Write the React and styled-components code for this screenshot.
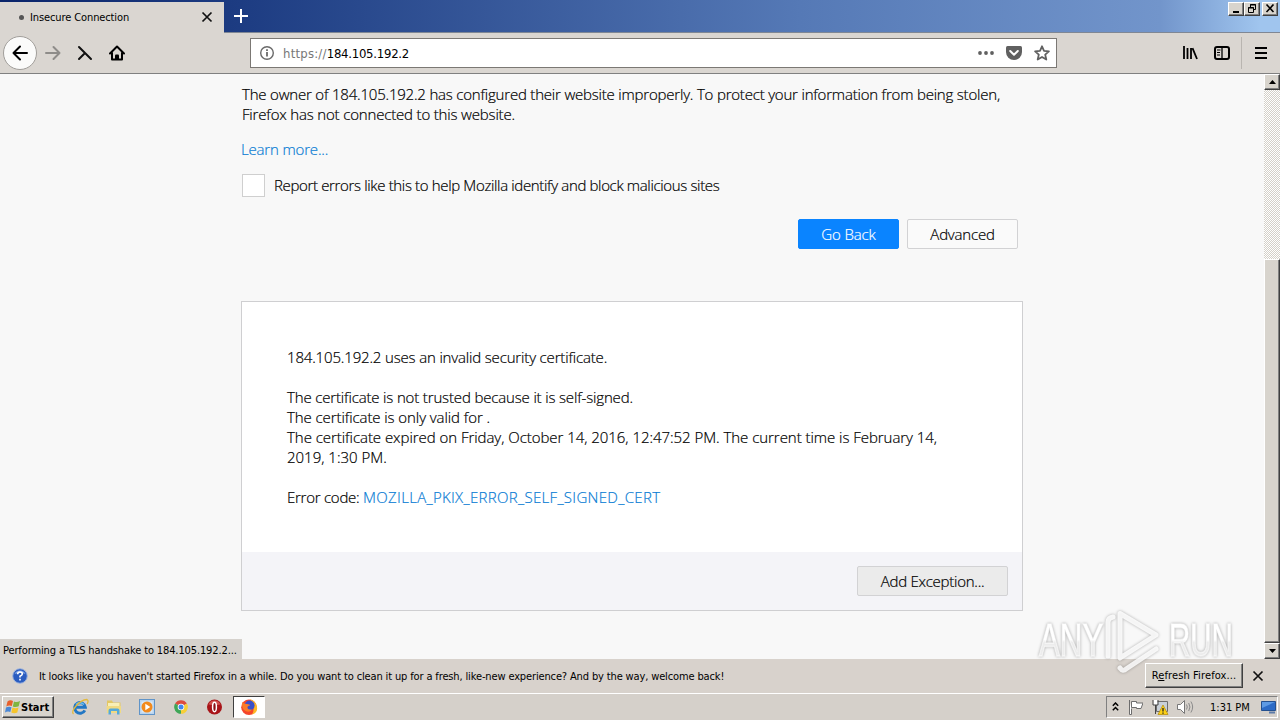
import React from 'react';
import styled, { createGlobalStyle } from 'styled-components';

const GlobalStyle = createGlobalStyle`
  * {
    box-sizing: border-box;
  }

  body {
    margin: 0;
    overflow: hidden;
    background: #f8f8f8;
    color: #000;
    font-family: 'DejaVu Sans Condensed', 'DejaVu Sans', sans-serif;
    font-stretch: condensed;
    font-size: 11px;
  }

  p {
    margin: 0;
  }

  svg {
    display: block;
    flex: none;
  }
`;

const App = () => {
  return (
    <Screen>
      <GlobalStyle />
      <TabStrip />
      <NavBar />
      <ErrorPage />
      <Notification />
      <Taskbar />
      <Watermark />
    </Screen>
  );
};

const TabStrip = () => (
  <Strip>
    <Tab>
      <Dot />
      <Label $spacing={-0.11}>Insecure Connection</Label>
      <svg width='12' height='12' viewBox='0 0 12 12'>
        <path d='M1.5 1.5l9 9m0-9l-9 9' stroke='#111' strokeWidth='1.7' />
      </svg>
    </Tab>
    <NewTab>
      <svg width='14' height='14' viewBox='0 0 14 14'>
        <path d='M7 0v14M0 7h14' stroke='#fff' strokeWidth='2' />
      </svg>
    </NewTab>
    <WindowButtons>
      <WindowButton>
        <svg width='10' height='9' viewBox='0 0 10 9'>
          <path d='M2 8h6' stroke='#000' strokeWidth='2' />
        </svg>
      </WindowButton>
      <WindowButton>
        <svg width='10' height='9' viewBox='0 0 10 9'>
          <path
            d='M3.5 3V.5h5v5H6.5M3 1h6M1.5 3.5h5v5h-5zM1 4h6'
            fill='none'
            stroke='#000'
          />
        </svg>
      </WindowButton>
      <WindowButton $gap>
        <svg width='10' height='9' viewBox='0 0 10 9'>
          <path d='M1.5 .5l7 7.5m0-7.5l-7 7.5' stroke='#000' strokeWidth='1.6' />
        </svg>
      </WindowButton>
    </WindowButtons>
  </Strip>
);

const NavBar = () => (
  <Nav>
    <BackButton>
      <svg width='16' height='16' viewBox='0 0 16 16'>
        <path
          d='M15 8H1.5M8 1.5L1.5 8L8 14.5'
          fill='none'
          stroke='#000'
          strokeWidth='2'
          strokeLinecap='round'
          strokeLinejoin='round'
        />
      </svg>
    </BackButton>
    <NavIcons>
      <svg width='16' height='16' viewBox='0 0 16 16'>
        <path
          d='M1 8h13.5M8.5 2l6 6l-6 6'
          fill='none'
          stroke='#8e8c89'
          strokeWidth='2'
          strokeLinecap='round'
          strokeLinejoin='round'
        />
      </svg>
      <svg width='16' height='16' viewBox='0 0 16 16'>
        <path
          d='M2 2l12 12M8 8L2 14'
          fill='none'
          stroke='#111'
          strokeWidth='2'
          strokeLinecap='round'
        />
      </svg>
      <svg width='16' height='16' viewBox='0 0 16 16'>
        <path
          d='M1 8.5L8 1.5L15 8.5M3 8v6.5h10V8'
          fill='none'
          stroke='#000'
          strokeWidth='2'
          strokeLinecap='round'
          strokeLinejoin='round'
        />
        <path d='M6 15v-4.5q0-1 1-1h2q1 0 1 1V15z' fill='#000' />
      </svg>
    </NavIcons>
    <UrlBar>
      <svg width='16' height='16' viewBox='0 0 16 16'>
        <circle cx='8' cy='8' r='6.3' fill='none' stroke='#6a6a6a' strokeWidth='1.4' />
        <path d='M8 7v4.5M8 4.2v1.7' stroke='#6a6a6a' strokeWidth='1.8' />
      </svg>
      <Url>
        <span>https://</span>184.105.192.2
      </Url>
      <UrlIcons>
        <svg width='18' height='16' viewBox='0 0 18 16'>
          <circle cx='4' cy='8' r='1.9' fill='#606060' />
          <circle cx='10' cy='8' r='1.9' fill='#606060' />
          <circle cx='16' cy='8' r='1.9' fill='#606060' />
        </svg>
        <svg width='16' height='16' viewBox='0 0 16 16'>
          <path d='M1.5 1h13Q16 1 16 2.5V7a8 8 0 0 1-16 0V2.5Q0 1 1.5 1z' fill='#606060' />
          <path
            d='M4.2 6L8 9.7L11.8 6'
            fill='none'
            stroke='#fff'
            strokeWidth='2'
            strokeLinecap='round'
            strokeLinejoin='round'
          />
        </svg>
        <svg width='16' height='16' viewBox='0 0 16 16'>
          <path
            d='M8 1.3l2 4.5l4.9.5l-3.7 3.3l1.1 4.9L8 12l-4.3 2.5l1.1-4.9L1.1 6.3L6 5.8z'
            fill='none'
            stroke='#606060'
            strokeWidth='1.8'
            strokeLinejoin='round'
          />
        </svg>
      </UrlIcons>
    </UrlBar>
    <ToolIcons>
      <svg width='16' height='16' viewBox='0 0 16 16'>
        <path d='M2 1v13M5.5 3v11M9 3v11M10.5 3.2L15 14' stroke='#000' strokeWidth='1.8' />
      </svg>
      <svg width='16' height='16' viewBox='0 0 16 16'>
        <rect x='1' y='2' width='14' height='12' rx='2' fill='none' stroke='#000' strokeWidth='2' />
        <path d='M8 2v12' stroke='#000' strokeWidth='1.3' />
        <path d='M3 5h3.5M3 7.5h3M3 10h3' stroke='#000' />
      </svg>
    </ToolIcons>
    <MenuButton>
      <svg width='12' height='12' viewBox='0 0 12 12'>
        <path d='M0 1h12M0 6h12M0 11h12' stroke='#000' strokeWidth='2' />
      </svg>
    </MenuButton>
  </Nav>
);

const ErrorPage = () => (
  <Page>
    <Content>
      <Intro>
        <Line $spacing={-0.198}>
          The owner of 184.105.192.2 has configured their website improperly. To protect your
          information from being stolen,
        </Line>
        <Line $spacing={-0.17}>Firefox has not connected to this website.</Line>
      </Intro>
      <LearnMore>
        <Line as='a' $spacing={-0.17}>Learn more...</Line>
      </LearnMore>
      <Report>
        <Checkbox />
        <Line $spacing={-0.345}>
          Report errors like this to help Mozilla identify and block malicious sites
        </Line>
      </Report>
      <Actions>
        <Button $primary $width={101} $spacing={-0.1}>Go Back</Button>
        <Button $width={111} $spacing={-0.2}>Advanced</Button>
      </Actions>
      <Panel>
        <Details>
          <Line $spacing={-0.16}>184.105.192.2 uses an invalid security certificate.</Line>
          <Line />
          <Line $spacing={-0.155}>The certificate is not trusted because it is self-signed.</Line>
          <Line $spacing={-0.08}>The certificate is only valid for .</Line>
          <Line $spacing={-0.042}>
            The certificate expired on Friday, October 14, 2016, 12:47:52 PM. The current time is
            February 14,
          </Line>
          <Line>2019, 1:30 PM.</Line>
          <Line />
          <Line $spacing={-0.25}>
            Error code: <ErrorCode>MOZILLA_PKIX_ERROR_SELF_SIGNED_CERT</ErrorCode>
          </Line>
        </Details>
        <PanelFooter>
          <Button $grey $width={151} $spacing={-0.25}>Add Exception...</Button>
        </PanelFooter>
      </Panel>
    </Content>
    <Scrollbar>
      <ScrollButton>
        <svg width='7' height='4' viewBox='0 0 7 4'>
          <path d='M3.5 0L7 4H0z' />
        </svg>
      </ScrollButton>
      <Thumb />
      <ScrollButton>
        <svg width='7' height='4' viewBox='0 0 7 4'>
          <path d='M3.5 4L7 0H0z' />
        </svg>
      </ScrollButton>
    </Scrollbar>
    <Status>
      <Label $spacing={-0.12}>Performing a TLS handshake to 184.105.192.2...</Label>
    </Status>
  </Page>
);

const Notification = () => (
  <NoticeBar>
    <svg width='16' height='16' viewBox='0 0 16 16'>
      <circle cx='8' cy='8' r='7.3' fill='#2a5cc0' stroke='#9fb4dc' />
      <path d='M2.5 6a6 6 0 0 1 11 0q-5-2-11 0z' fill='#7fa4e6' />
      <path
        d='M5.7 6.2Q5.7 4 8 4t2.3 2Q10.3 7.2 8 8.3v1.2M8 10.7v1.7'
        fill='none'
        stroke='#fff'
        strokeWidth='1.6'
      />
    </svg>
    <Label $spacing={-0.137}>
      It looks like you haven't started Firefox in a while. Do you want to clean it up for a fresh,
      like-new experience? And by the way, welcome back!
    </Label>
    <RefreshButton>
      <Label $spacing={0.12}>
        R<u>e</u>fresh Firefox...
      </Label>
    </RefreshButton>
    <svg width='12' height='12' viewBox='0 0 12 12'>
      <path d='M1.5 1.5l9 9m0-9l-9 9' stroke='#111' strokeWidth='1.7' />
    </svg>
  </NoticeBar>
);

const Taskbar = () => (
  <Bar>
    <StartButton>
      <svg width='16' height='16' viewBox='0 0 16 16'>
        <path d='M2.5 2.5Q5 .5 8 2L6.8 7Q4 6 1.3 7.5z' fill='#e8602c' />
        <path d='M9 2.5q3 1.3 6-.5l-1.3 5.2q-3 1.5-5.9.2z' fill='#7fb541' />
        <path d='M1 8.5Q4 7 6.5 8.2L5.3 13Q2.500 12 0 13.5z' fill='#4a87d6' />
        <path d='M7.5 8.6q3 1.2 6 0L12.3 13.5q-3 1.5-6 0z' fill='#f6c52c' />
      </svg>
      Start
    </StartButton>
    <QuickLaunch>
      <svg width='18' height='18' viewBox='0 0 18 18'>
        <path
          d='M13.8 12.3A5.3 5.3 0 1 1 14.3 9.3H5'
          fill='none'
          stroke='#2277c4'
          strokeWidth='3'
        />
        <path d='M5 6.5a5.3 5.3 0 0 1 8 0' fill='none' stroke='#67bdf0' strokeWidth='1.5' />
        <path
          d='M2.5 16Q0 14 5 8T16 1.5q2 1 .2 4.5'
          fill='none'
          stroke='#e3b93c'
          strokeWidth='1.3'
        />
      </svg>
      <svg width='18' height='18' viewBox='0 0 18 18'>
        <path d='M2 2.5h5l1 2h7.5v10H2z' fill='#e3c764' />
        <path d='M3 5h11.5v4H3z' fill='#f9efb6' />
        <path d='M1.5 8h14.5v7H2z' fill='#f1da82' />
        <path d='M3.5 16.5v-4q0-2 2-2h7q2 0 2 2v4H12v-3.5H6v3.5z' fill='#55a9da' />
      </svg>
      <svg width='18' height='18' viewBox='0 0 18 18'>
        <rect x='1.5' y='1.5' width='15' height='15' fill='#b9d4ef' stroke='#6094c8' />
        <rect x='3.5' y='3.5' width='11' height='11' fill='#dbe9f6' />
        <circle cx='9' cy='9' r='5.5' fill='#f28a1d' />
        <path d='M7.3 5.8L12.3 9L7.3 12.2z' fill='#fff' />
      </svg>
      <svg width='18' height='18' viewBox='0 0 18 18'>
        <path d='M9 9L3.1 5.6A6.8 6.8 0 0 1 14.9 5.6z' fill='#dd4b3e' />
        <path d='M9 9L14.9 5.6A6.8 6.8 0 0 1 9 15.8z' fill='#f7cf38' />
        <path d='M9 9V15.8A6.8 6.8 0 0 1 3.1 5.6z' fill='#3fa657' />
        <circle cx='9' cy='9' r='3.3' fill='#fff' />
        <circle cx='9' cy='9' r='2.5' fill='#4286ee' />
      </svg>
      <svg width='18' height='18' viewBox='0 0 18 18'>
        <circle cx='9.5' cy='9' r='7.5' fill='#a81418' />
        <path d='M3.5 6.5a6.5 6.5 0 0 1 12 0Q9.5 8 3.5 6.5z' fill='#d0504c' />
        <ellipse cx='9.5' cy='9' rx='1.9' ry='4.7' fill='#8c1014' stroke='#fff' strokeWidth='1.5' />
      </svg>
    </QuickLaunch>
    <ActiveTask>
      <svg width='18' height='18' viewBox='0 0 18 18'>
        <circle cx='9' cy='9.2' r='7.8' fill='#f5462b' />
        <path d='M10 1q6 2 7 8t-5 7.5q4-6-2-15.5z' fill='#fdb827' />
        <circle cx='9.6' cy='7.5' r='5' fill='#3a4fc9' />
        <path d='M2 4q2 2 5 2t3 1.5q-3 .5-2.5 2.5T12 11.5Q9.5 15 5.5 13T2 4z' fill='#fb7b27' />
      </svg>
    </ActiveTask>
    <Tray>
      <svg width='7' height='11' viewBox='0 0 7 11'>
        <path
          d='M.8 3.7L3.5 1L6.2 3.7M.8 8.2L3.5 5.5L6.2 8.2'
          fill='none'
          stroke='#000'
          strokeWidth='1.5'
        />
      </svg>
      <svg width='16' height='16' viewBox='0 0 16 16'>
        <path
          d='M2.5 1v14.5h2V9.5M4.5 2.500h5v1.5h6.5l-2 5.5H9.5V8.5h-5z'
          fill='#fff'
          stroke='#6d6d6d'
        />
      </svg>
      <svg width='18' height='16' viewBox='0 0 18 16'>
        <path d='M5.5 2.5h11v10h-11z' fill='#c9d0d8' stroke='#6d6d6d' />
        <path d='M2.5 1h4v5h-4z' fill='#fff' />
        <path d='M2 1v5h5V1M4.500 6v9' fill='none' stroke='#444' />
        <path d='M12 6l5 9.5H7z' fill='#fcd116' stroke='#b48a00' strokeWidth='.7' />
        <path d='M12 9v3.5m0 1v1.2' stroke='#222' strokeWidth='1.3' />
      </svg>
      <svg width='17' height='16' viewBox='0 0 17 16'>
        <path d='M.5 5.500h3l4-4v13l-4-4h-3z' fill='#fff' stroke='#777' />
        <path
          d='M9.5 5.5q1.5 2.5 0 5M11.7 4q2.5 4 0 8M13.9 2.5q3.5 5.5 0 11'
          fill='none'
          stroke='#8a8a8a'
        />
      </svg>
      <Clock>1:31 PM</Clock>
      <svg width='15' height='14' viewBox='0 0 15 14'>
        <path d='M.5 1.5h14v9H.5z' fill='#2c6bc6' stroke='#24508f' />
        <path d='M1 2h13L1 8z' fill='#5d9ae4' />
        <path d='M8 12.5h6' stroke='#5d7ba8' strokeWidth='2' />
      </svg>
    </Tray>
  </Bar>
);

const Watermark = () => (
  <Mark width='206' height='72' viewBox='0 0 206 72'>
    <defs>
      <linearGradient id='fade' x1='0' y1='0' x2='0' y2='1'>
        <stop offset='.5' stopColor='#fff' />
        <stop offset='.55' stopColor='#ececec' />
      </linearGradient>
    </defs>
    <g fill='url(#fade)'>
      <text transform='translate(3 50) scale(.68 1)'>ANY</text>
      <text transform='translate(133 50) scale(.64 1)'>RUN</text>
    </g>
    <path
      d='M77 11q-5 1-5 5v34M84 7.5l36 21.5L84 52zM84 62q3 4 6 1l30-20'
      fill='none'
      stroke='#fff'
      strokeOpacity='.85'
      strokeWidth='5'
      strokeLinejoin='round'
      strokeLinecap='round'
    />
  </Mark>
);

const Screen = styled.div`
  width: 1280px;
  height: 720px;
  display: flex;
  flex-direction: column;
  position: relative;
  overflow: hidden;
`;

const Label = styled.span`
  letter-spacing: ${(props) => props.$spacing || 0}px;
  white-space: nowrap;
  color: #000;
`;

const Strip = styled.header`
  height: 33px;
  flex: none;
  display: flex;
  align-items: flex-start;
  background: linear-gradient(
    90deg,
    #0a246a 0,
    #1d3c82 240px,
    #5579b6 800px,
    #7295cb 1160px,
    #a0c5ee 1260px
  );
  border-bottom: 1px solid #7f8794;
`;

const Tab = styled.div`
  width: 224px;
  height: 31px;
  margin-top: 2px;
  padding: 0 11px 1px 19px;
  display: flex;
  align-items: center;
  background: #dad6d1;

  ${Label} {
    flex: 1;
    margin-left: 6px;
  }
`;

const Dot = styled.i`
  width: 5px;
  height: 5px;
  border-radius: 50%;
  background: #555;
`;

const NewTab = styled.div`
  padding: 9px 10px;
`;

const WindowButtons = styled.div`
  margin: 2px 2px 0 auto;
  display: flex;
`;

const bevel = `
  background: #d8d4cd;
  border: 1px solid;
  border-color: #fff #404040 #404040 #fff;
  box-shadow: inset -1px -1px #808080;
`;

const WindowButton = styled.div`
  width: 16px;
  height: 14px;
  padding: 1px 2px;
  margin-left: ${(props) => (props.$gap ? '2px' : '0')};
  ${bevel}
`;

const Nav = styled.nav`
  height: 41px;
  flex: none;
  display: flex;
  align-items: center;
  background: #dad6d1;
  border-bottom: 1px solid #808080;
`;

const BackButton = styled.div`
  width: 34px;
  height: 34px;
  margin-left: 3px;
  display: grid;
  place-items: center;
  background: #fbfbfa;
  border: 1px solid #a19e9a;
  border-radius: 50%;
`;

const NavIcons = styled.div`
  width: 213px;
  display: flex;
  gap: 16px;
  padding-left: 8px;
`;

const UrlBar = styled.div`
  width: 807px;
  height: 30px;
  padding: 0 6px 0 8px;
  display: flex;
  align-items: center;
  background: #fff;
  border: 1px solid #7b7874;
`;

const Url = styled.div`
  margin-left: 8px;
  font-size: 13px;
  letter-spacing: -0.25px;
  color: #000;

  span {
    color: #777;
    letter-spacing: 0.22px;
  }
`;

const UrlIcons = styled.div`
  margin-left: auto;
  display: flex;
  gap: 12px;
`;

const ToolIcons = styled.div`
  display: flex;
  gap: 16px;
  margin-left: 125px;
`;

const MenuButton = styled.div`
  height: 32px;
  margin-left: 11px;
  padding-left: 13px;
  display: flex;
  align-items: center;
  border-left: 1px solid #b9b5b0;
`;

const Page = styled.main`
  height: 585px;
  flex: none;
  position: relative;
  display: flex;
  justify-content: space-between;
  background: #f8f8f8;
  font-family: 'Open Sans', sans-serif;
  font-size: 15px;
  font-weight: 300;
  font-stretch: normal;

  a {
    color: #0a7cd4;
  }
`;

const Content = styled.div`
  width: 782px;
  margin-left: 241px;
  padding-top: 10px;
`;

const Line = styled.p`
  display: block;
  height: 20px;
  line-height: 20px;
  white-space: nowrap;
  letter-spacing: ${(props) => props.$spacing || 0}px;
  -webkit-text-stroke: 0.2px;
`;

const ErrorCode = styled.a`
  letter-spacing: 0.31px;
`;

const Intro = styled.div`
  height: 40px;
  padding-left: 1px;
`;

const LearnMore = styled.div`
  height: 20px;
  margin-top: 15px;
`;

const Report = styled.div`
  height: 23px;
  margin-top: 15px;
  padding-left: 1px;
  display: flex;
  gap: 9px;

  ${Line} {
    padding-top: 1px;
  }
`;

const Checkbox = styled.i`
  width: 23px;
  height: 23px;
  background: #fff;
  border: 1px solid #cfcfcf;
`;

const Actions = styled.div`
  margin-top: 22px;
  padding-right: 5px;
  display: flex;
  justify-content: flex-end;
  gap: 8px;
`;

const Button = styled.button`
  width: ${(props) => props.$width}px;
  height: 30px;
  padding: 0;
  font: inherit;
  letter-spacing: ${(props) => props.$spacing}px;
  white-space: nowrap;
  -webkit-text-stroke: 0.2px;
  border-radius: 2px;
  color: ${(props) => (props.$primary ? '#fff' : '#000')};
  background: ${(props) => (props.$primary ? '#0a84ff' : props.$grey ? '#ebebeb' : '#fafafa')};
  border: 1px solid ${(props) => (props.$primary ? '#0a84ff' : '#d2d2d4')};
`;

const Panel = styled.section`
  height: 310px;
  margin-top: 52px;
  display: flex;
  flex-direction: column;
  background: #fff;
  border: 1px solid #cfcfd1;
`;

const Details = styled.div`
  flex: 1;
  padding: 45px 45px 0;
`;

const PanelFooter = styled.div`
  height: 58px;
  padding: 14px;
  display: flex;
  justify-content: flex-end;
  background: #f4f4f8;
`;

const Scrollbar = styled.div`
  width: 16px;
  display: flex;
  flex-direction: column;
  background: repeating-conic-gradient(#d4d0c8 0 25%, #fff 0 50%) 0 0 / 2px 2px;
`;

const ScrollButton = styled.div`
  height: 16px;
  flex: none;
  display: grid;
  place-items: center;
  ${bevel}
`;

const Thumb = styled.div`
  flex: 1;
  margin-top: 169px;
  ${bevel}
`;

const Status = styled.div`
  position: absolute;
  left: 0;
  bottom: 0;
  width: 242px;
  height: 20px;
  padding: 1px 0 0 3px;
  font: 11px/21px 'DejaVu Sans Condensed', 'DejaVu Sans', sans-serif;
  background: #d6d2cd;
`;

const NoticeBar = styled.div`
  height: 34px;
  flex: none;
  padding: 0 16px 0 12px;
  display: flex;
  align-items: center;
  background: #d8d2cc;

  > ${Label} {
    margin-left: 11px;
  }
`;

const RefreshButton = styled.div`
  width: 98px;
  height: 25px;
  margin: 0 9px 2px auto;
  display: grid;
  place-items: center;
  ${bevel}
`;

const Bar = styled.footer`
  height: 27px;
  flex: none;
  display: flex;
  align-items: center;
  background: #d5d0ca;
  border-top: 1px solid #fff;
`;

const StartButton = styled.div`
  width: 52px;
  height: 22px;
  margin-left: 2px;
  padding-left: 2px;
  display: flex;
  align-items: center;
  font-weight: bold;
  color: #000;
  ${bevel}
`;

const QuickLaunch = styled.div`
  margin-left: 17px;
  display: flex;
  gap: 15.6px;
`;

const ActiveTask = styled.div`
  width: 32px;
  height: 22px;
  margin-left: 10px;
  display: grid;
  place-items: center;
  background: #fff;
  border: 1px solid;
  border-color: #404040 #fff #fff #404040;
`;

const Tray = styled.div`
  width: 172px;
  height: 22px;
  margin: 0 2px 0 auto;
  padding: 0 1px 0 5px;
  display: flex;
  align-items: center;
  gap: 8px;
  border: 1px solid;
  border-color: #808080 #fff #fff #808080;
`;

const Clock = styled.span`
  flex: 1;
  padding-left: 8px;
  white-space: nowrap;
  color: #000;
`;

const Mark = styled.svg`
  position: absolute;
  left: 1036px;
  top: 606px;
  filter: drop-shadow(0 0 1.5px rgba(0, 0, 0, 0.35));

  text {
    font: 400 46px 'Liberation Sans', sans-serif;
    stroke: #fff;
    stroke-opacity: 0.6;
    stroke-width: 1.5px;
  }
`;

export default App;
